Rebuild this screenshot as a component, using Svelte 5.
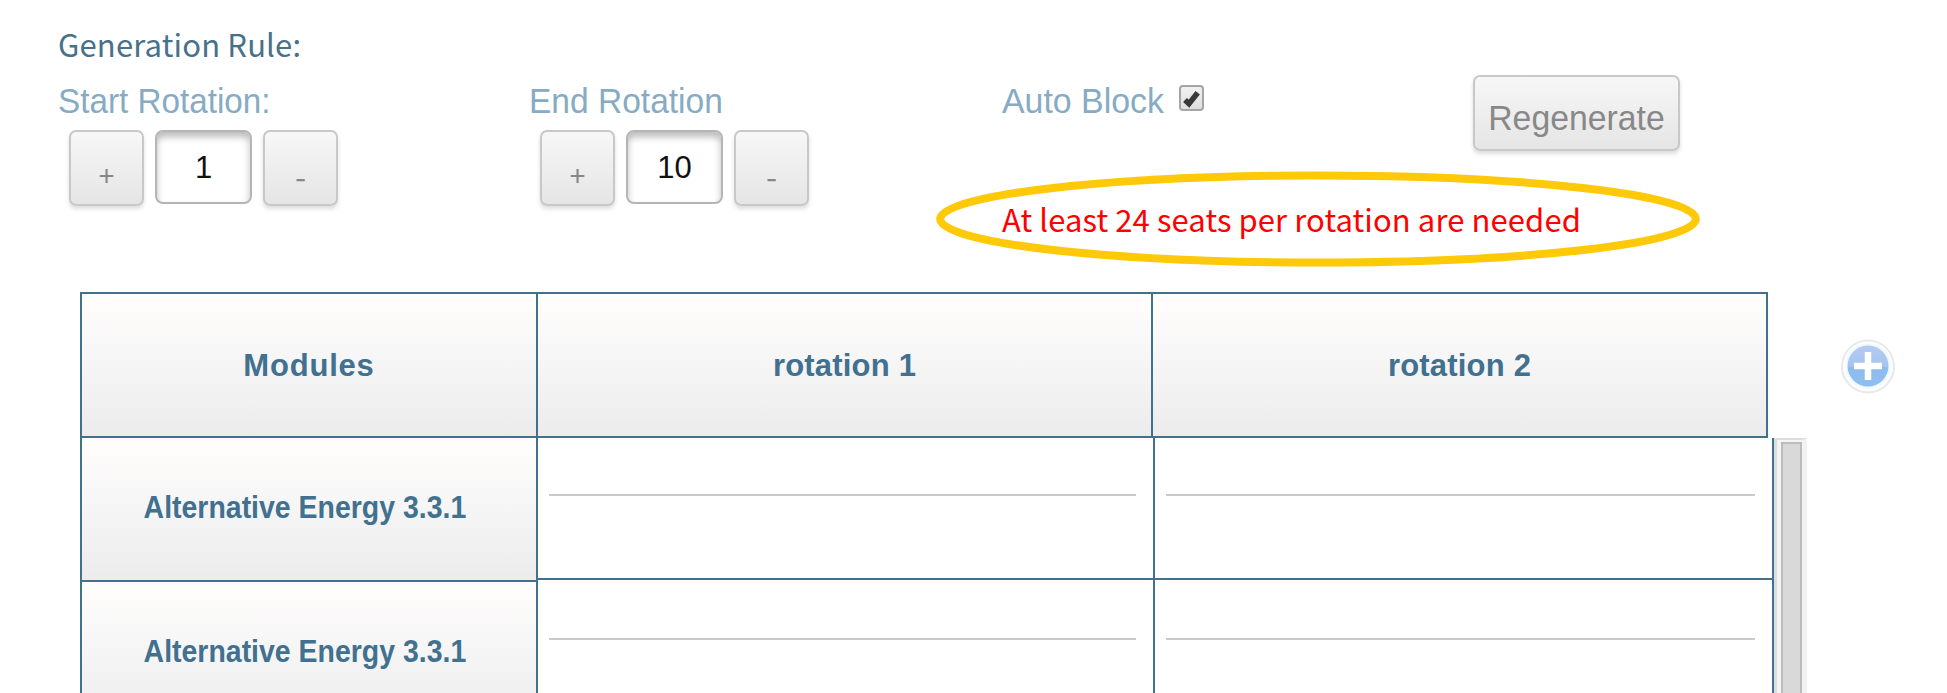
<script>
  let start = $state(1);
  let end = $state(10);
  const rotations = ['rotation 1', 'rotation 2'];
  const modules = ['Alternative Energy 3.3.1', 'Alternative Energy 3.3.1'];
</script>

<main>
  <h1>Generation Rule:</h1>
  <section class="controls">
    <div class="field">
      <span class="label start-label">Start Rotation:</span>
      <div class="stepper">
        <button class="plus" onclick={() => start++}>+</button>
        <span class="value">{start}</span>
        <button class="minus" onclick={() => start--}>-</button>
      </div>
    </div>
    <div class="field">
      <span class="label end-label">End Rotation</span>
      <div class="stepper">
        <button class="plus" onclick={() => end++}>+</button>
        <span class="value">{end}</span>
        <button class="minus" onclick={() => end--}>-</button>
      </div>
    </div>
    <div class="field auto">
      <div class="check-row">
        <span class="label auto-label">Auto Block</span>
        <svg class="check" width="25" height="26" viewBox="0 0 25 26">
          <defs><linearGradient id="box" x2="0" y2="1"><stop stop-color="#f2f2f2" /><stop offset="1" stop-color="#dedede" /></linearGradient></defs>
          <rect x="1" y="1" width="23" height="24" rx="3" fill="url(#box)" stroke="#a5a5a5" stroke-width="2" />
          <path d="M6 15 10 18.8 18.7 7.8" fill="none" stroke="#393939" stroke-width="5.5" />
        </svg>
      </div>
      <div class="warning">
        <p>At least 24 seats per rotation are needed</p>
        <svg class="ring" width="764" height="96" viewBox="0 0 764 96">
          <ellipse cx="382" cy="48" rx="377.8" ry="43.5" fill="none" stroke="#fdc908" stroke-width="8" />
        </svg>
      </div>
    </div>
    <button class="regenerate"><span>Regenerate</span></button>
  </section>

  <section class="schedule">
    <div class="table">
      <div class="head">
        <div class="cell modules">Modules</div>
        {#each rotations as name}
          <div class="cell rotation">{name}</div>
        {/each}
      </div>
      <div class="body">
        <div class="names">
          {#each modules as name}
            <div class="name"><span>{name}</span></div>
          {/each}
        </div>
        <div class="slots">
          {#each modules as _}
            <div class="slot-row">
              <div class="slot"><i></i></div>
              <div class="slot"><i></i></div>
            </div>
          {/each}
        </div>
        <div class="scroll"><div class="thumb"></div></div>
      </div>
    </div>
    <svg class="add" width="56" height="56" viewBox="0 0 56 56">
      <defs>
        <linearGradient id="blue" x2="0" y2="1"><stop stop-color="#b5caf0" /><stop offset=".5" stop-color="#a5c5ef" /><stop offset=".55" stop-color="#8dbbec" /><stop offset="1" stop-color="#8fbff0" /></linearGradient>
      </defs>
      <circle cx="28" cy="28.5" r="26" fill="#fbfdfe" stroke="#e9e9e9" stroke-width="2" />
      <circle cx="28" cy="28" r="22.5" fill="#eefaff" />
      <circle cx="28" cy="28" r="20.5" fill="url(#blue)" />
      <path d="M28 14v28M14 28h28" stroke="#fff" stroke-width="6.5" />
    </svg>
  </section>
</main>

<style>
  :global(body) { background: #fff; overflow: hidden; }
  main { width: 1947px; height: 693px; overflow: hidden; box-sizing: border-box; padding: 22px 0 0 58px; font-family: "Liberation Sans", sans-serif; }
  h1, p { margin: 0; font: 400 31px/44px "Noto Sans CJK SC", sans-serif; white-space: nowrap; }
  h1 { color: #47708b; letter-spacing: 0.15px; }
  .controls { display: grid; grid-template-columns: 471px 471px 473px 207px; height: 226px; align-items: start; padding-top: 9px; box-sizing: border-box; }
  .label { display: block; width: max-content; font-size: 35px; line-height: 52px; color: #87abc2; white-space: nowrap; transform: scaleX(.968); transform-origin: left; }
  .start-label { transform: scaleX(.95); }
  .end-label { transform: scaleX(.958); }
  .stepper { display: flex; gap: 11px; padding: 3px 0 1px 11px; }
  button { box-sizing: border-box; border: 2px solid #c8c8c8; border-radius: 7px; background: linear-gradient(#f7f7f7, #e5e5e5); box-shadow: 0 3px 4px #0002; color: #888; font-family: "Liberation Sans", sans-serif; }
  .stepper button { width: 75px; height: 76px; padding: 11px 0 0; font: 28px/30px "Noto Sans CJK SC", sans-serif; }
  .stepper .minus { padding-top: 14px; font-size: 32px; }
  .value { box-sizing: border-box; width: 97px; height: 74px; border: 2px solid #b5b5b5; border-radius: 8px; box-shadow: inset 0 5px 7px #0004; text-align: center; font-size: 31px; line-height: 72px; color: #111; }
  .check-row { display: flex; gap: 10px; padding-left: 2px; }
  .check { margin-top: 10px; }
  .warning { position: relative; margin-top: 70px; padding-left: 2px; }
  p { color: #f00; letter-spacing: 0.1px; }
  .ring { position: absolute; left: -64px; top: -26px; }
  .regenerate { width: 207px; height: 76px; padding: 9px 0 0; font-size: 35px; }
  .regenerate span { display: block; margin: 0 -4px; transform: scaleX(.965); }
  .schedule { display: flex; padding-left: 22px; }
  .table { width: 1727px; }
  .head { display: flex; width: 1688px; height: 146px; box-sizing: border-box; border: 2px solid #43718b; border-right: 0; }
  .cell, .name { box-sizing: border-box; border-right: 2px solid #43718b; background: linear-gradient(#fffefc, #f8f7f8 40%, #ececec); font-weight: 700; font-size: 31px; color: #41718f; text-align: center; }
  .cell { width: 615px; line-height: 144px; height: 142px; letter-spacing: 0.2px; }
  .modules { width: 456px; letter-spacing: 0.8px; }
  .body { display: flex; height: 260px; }
  .names { width: 458px; border-left: 2px solid #43718b; box-sizing: border-box; }
  .name { height: 144px; border-bottom: 2px solid #43718b; line-height: 138px; font-size: 30.5px; padding-right: 9px; }
  .name span { display: inline-block; transform: scaleX(.933); }
  .slots { width: 1236px; }
  .slot-row { display: flex; height: 144px; }
  .slot-row:first-child { height: 142px; }
  .slot { width: 617px; box-sizing: border-box; border: solid #43718b; border-width: 0 2px 2px 0; padding: 56px 17px 0 11px; }
  .slot + .slot { width: 619px; }
  .slot-row + .slot-row .slot { padding-top: 58px; }
  .slot i { display: block; height: 2px; background: #c9c9c9; }
  .scroll { box-sizing: border-box; width: 33px; border-top: 2px solid #ddd; border-left: 3px solid #dcdcdc; border-right: 5px solid #f2f2f2; background: #f4f4f4; padding: 2px 0 0 4px; }
  .thumb { box-sizing: border-box; width: 21px; height: 260px; border: 2px solid #bcbcbc; background: #d9d9d9; }
  .add { margin: 46px 0 0 33px; }
</style>
